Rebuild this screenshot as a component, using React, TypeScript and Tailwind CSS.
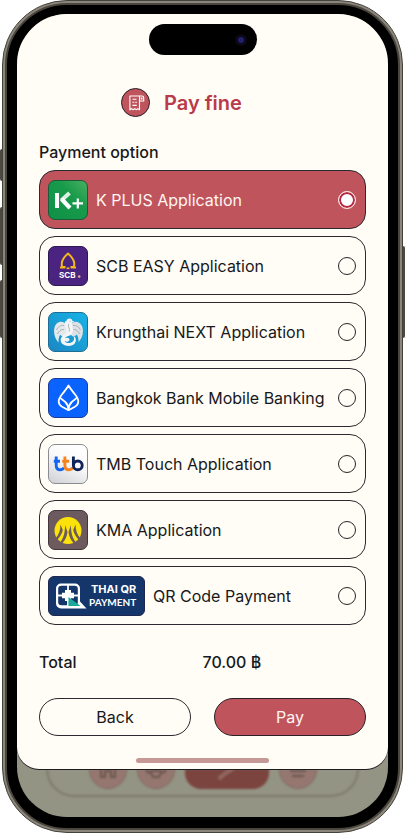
import { useState } from 'react'
import type { ReactNode } from 'react'

const KPlusLogo = () => (
  <svg viewBox="0 0 40 40" className="size-10 shrink-0" aria-hidden="true">
    <defs>
      <linearGradient id="kplus" x1="0" y1="1" x2="1" y2="0">
        <stop offset="0" stopColor="#0e9146" />
        <stop offset="0.6" stopColor="#179a4a" />
        <stop offset="1" stopColor="#4bb062" />
      </linearGradient>
    </defs>
    <rect x="0.5" y="0.5" width="39" height="39" rx="6.5" fill="url(#kplus)" stroke="#1d5a3a" />
    <path d="M9 13v15" stroke="#fff" strokeWidth="4" />
    <path d="M21.5 13 13.2 20.4" stroke="#d9efdf" strokeWidth="4" />
    <path d="m13.6 19 8.4 9" stroke="#fff" strokeWidth="4.2" />
    <path d="M24.5 23.4h10.5M29.8 18.4v10" stroke="#fff" strokeWidth="2.2" />
  </svg>
)

const ScbLogo = () => (
  <svg viewBox="0 0 40 40" className="size-10 shrink-0" aria-hidden="true">
    <rect x="0.5" y="0.5" width="39" height="39" rx="6.5" fill="#4a2480" stroke="#2d1950" />
    <path
      d="M20 7.5c-3 2.6-5.8 6-6.2 9.5-.2 1.6 0 2.8.4 4h11.6c.4-1.2.6-2.4.4-4-.4-3.5-3.2-6.9-6.2-9.5Z"
      fill="none"
      stroke="#f5b81c"
      strokeWidth="2"
      strokeLinejoin="round"
    />
    <path d="M12 21.5h5M23 21.5h5" stroke="#f5b81c" strokeWidth="2" />
    <path d="M17.5 21h5" stroke="#4a2480" strokeWidth="2.4" />
    <path d="M18.5 22.3h3" stroke="#f5b81c" strokeWidth="1.6" />
    <text x="11" y="32" fontSize="8" fontWeight="700" fill="#fff" className="font-['Inter',sans-serif]">
      SCB
    </text>
    <circle cx="31.2" cy="30.5" r="1.3" fill="#e6a9a0" />
  </svg>
)

const KrungthaiLogo = () => (
  <svg viewBox="0 0 40 40" className="size-10 shrink-0" aria-hidden="true">
    <defs>
      <linearGradient id="ktb" x1="0" y1="1" x2="1" y2="0">
        <stop offset="0" stopColor="#1b86c4" />
        <stop offset="1" stopColor="#18b4e6" />
      </linearGradient>
    </defs>
    <rect x="0.5" y="0.5" width="39" height="39" rx="6.5" fill="url(#ktb)" stroke="#1f6c96" />
    {/* wings */}
    <path
      d="M19 12.500C14 7.500 8 9.500 6.500 15.500c-1.300 5.500.5 11 4 15 0-3 .2-5.800 1.700-7.800 1 1.300 2.800 1.800 4.800 1.600 2.500-3 3.500-7.800 2-11.800Z"
      fill="#e6e9eb"
    />
    <path
      d="M22 12.500c4.500-5 11-3 12.500 3 1.300 5.500-.5 11-4 14.500.2-3-.3-5.500-1.800-7.500-1 1.500-2.700 2-4.700 1.500-2.500-2.500-3.500-7.500-2-11.500Z"
      fill="#dde1e4"
    />
    {/* head, body and tail */}
    <path
      d="M17 10.500c-.3-1 .5-1.500 1.300-1 .2-1.800 1.500-3 3.200-3 1.800 0 2.700 1 2.800 2.300l2.200 1-2.500.7c-.5 2 .3 3.500.8 5.500.8 3-.3 6-2.800 7.500-2 1-4.500 1-5 2.800 2.500-1 4.500-.3 4.500 1.500s-2.500 2.500-5 1.200c1.500 2.500 5.500 2.800 8 .8 2-1.600 2-4 .7-6 2.800 1.200 3.500 5 1.700 7.500-2.300 3-8.400 3.500-11.900 1-3-2.200-3-6-.5-8.300 1.600-1.500 3.500-2 4-4 .5-2-.5-4-1-6-.3-1.300-.3-2.500-.5-3.500Z"
      fill="#f4f5f6"
    />
    <g fill="none" stroke="#98a4ac" strokeWidth="0.8">
      <path d="M8.500 18c1.500-3 4-5 7.500-4.500M9.500 22c1.300-3 3.500-4.800 6.500-4.500" />
      <path d="M32.500 18c-1.500-3-4-5-7.500-4.500M31.500 22c-1.300-3-3.500-4.800-6-4.500" />
      <path d="M20.500 12c-.8 2.500 1.500 4.500.8 7.500M21.500 9.300h1" />
    </g>
  </svg>
)

const BangkokBankLogo = () => (
  <svg viewBox="0 0 40 40" className="size-10 shrink-0" aria-hidden="true">
    <rect x="0.5" y="0.5" width="39" height="39" rx="6.5" fill="#0a63ff" stroke="#1b3c9c" />
    <g fill="none" stroke="#fff" strokeWidth="1.8" strokeLinejoin="round">
      <path d="M20.500 7.500c-1.500 3-4 5.400-6 8.200-2 2.700-3.800 5-3.800 7.500 0 2.300 1 4 3 5.300l6.800 3.700 6.800-3.700c2-1.300 3-3 3-5.300 0-2.500-1.800-4.800-3.800-7.500-2-2.800-4.500-5.200-6-8.200Z" />
      <path d="M12 19.500c1.500 1.800 3.500 2.700 5.300 4.500 2.200 2.200 3.200 4.700 3.200 8 0-3.300 1-5.800 3.200-8 1.800-1.800 3.800-2.700 5.300-4.500" />
    </g>
  </svg>
)

const TtbLogo = () => (
  <svg viewBox="0 0 40 40" className="size-10 shrink-0" aria-hidden="true">
    <defs>
      <linearGradient id="ttb" x1="0.2" y1="1" x2="0.7" y2="0">
        <stop offset="0" stopColor="#d3d4d7" />
        <stop offset="0.6" stopColor="#fafafa" />
        <stop offset="1" stopColor="#fff" />
      </linearGradient>
    </defs>
    <rect x="0.5" y="0.5" width="39" height="39" rx="6.5" fill="url(#ttb)" stroke="#8b8c92" />
    <g fill="none" strokeWidth="2.9">
      <path d="M8.200 12.500v8.700c0 3 1.500 4.600 4 4.600 1.700 0 3-.8 3.800-2.200M5.800 17.200h6.200" stroke="#1266f1" />
      <path d="M16.900 12.500v8.700c0 3 1.500 4.600 4 4.600 1.700 0 3-.8 3.800-2.200M14.200 17.200h7" stroke="#f5841f" />
      <path d="M25.400 12.500v9" stroke="#10245a" />
      <circle cx="29.800" cy="21.400" r="4.400" stroke="#10245a" />
    </g>
  </svg>
)

const KmaLogo = () => (
  <svg viewBox="0 0 40 40" className="size-10 shrink-0" aria-hidden="true">
    <rect x="0.5" y="0.5" width="39" height="39" rx="6.5" fill="#6c5a5e" stroke="#40363b" />
    <circle cx="20" cy="20.5" r="13.5" fill="#fbe20a" />
    {/* gaps between the feathers */}
    <g fill="#6c5a5e">
      <path d="M17 15l2.500 7c-.5 4.500-2.300 8.500-5.500 11.500l-2-1c3.500-4.500 5.200-10 5-17.500Z" />
      <path d="M23 15l-2.500 7c.5 4.500 2.300 8.500 5.500 11.500l2-1c-3.500-4.500-5.200-10-5-17.500Z" />
      <path d="M12.500 14.500l2.300 5.500c-1 4-3 7.500-6 10l-1.200-1.800c3.200-3.500 4.900-8 4.900-13.700Z" />
      <path d="M27.500 14.500l-2.300 5.500c1 4 3 7.500 6 10l1.200-1.800c-3.200-3.500-4.900-8-4.900-13.700Z" />
    </g>
  </svg>
)

const ThaiQrLogo = () => (
  <span className="flex h-10 w-[97px] shrink-0 items-center gap-0.5 rounded-md border border-[#1d2850] bg-[#14366a] pl-1.5">
    <svg viewBox="0 0 32 26" className="h-[26px] w-8 shrink-0" aria-hidden="true">
      <path d="M31.500 25.500H6a5 5 0 0 1-5-5V5.500a5 5 0 0 1 5-5h14a5 5 0 0 1 5 5v13Z" fill="#fff" />
      <rect x="3.200" y="2.700" width="19.600" height="19.600" rx="3.200" fill="#14366a" />
      <path d="M13 2v21M2 12.500h22" stroke="#fff" strokeWidth="1.8" />
      <path d="M10 7h6v2.800h3v5.400h-3V18h-6v-2.800H7V9.800h3Z" fill="#fff" />
      <path d="M13.500 23v-9l12 9Z" fill="#1aa89a" />
    </svg>
    <span className="leading-[13px] font-bold text-white">
      <span className="block text-right text-[11px]">THAI QR</span>
      <span className="block text-right font-['Lato',sans-serif] text-[10px]">PAYMENT</span>
    </span>
  </span>
)

type Option = { id: string; label: string; logo: ReactNode }

const OPTIONS: Option[] = [
  { id: 'kplus', label: 'K PLUS Application', logo: <KPlusLogo /> },
  { id: 'scb', label: 'SCB EASY Application', logo: <ScbLogo /> },
  { id: 'ktb', label: 'Krungthai NEXT Application', logo: <KrungthaiLogo /> },
  { id: 'bbl', label: 'Bangkok Bank Mobile Banking', logo: <BangkokBankLogo /> },
  { id: 'ttb', label: 'TMB Touch Application', logo: <TtbLogo /> },
  { id: 'kma', label: 'KMA Application', logo: <KmaLogo /> },
  { id: 'qr', label: 'QR Code Payment', logo: <ThaiQrLogo /> },
]

function PaySheet() {
  const [selected, setSelected] = useState('kplus')

  return (
    <form className="relative z-10 rounded-b-[22px] bg-[#fffdf5] px-[22px] pt-2.5 pb-1.5 shadow-[0_1px_0_#1c1c20]">
      {/* Dynamic island */}
      <div className="mx-auto flex h-[31px] w-[108px] items-center justify-end rounded-full bg-black pr-2.5">
        <span className="flex size-3 items-center justify-center rounded-full bg-[#0c0818]">
          <span className="size-1.5 rounded-full bg-[#20206a]" />
        </span>
      </div>

      <header className="mt-[33px] flex items-center gap-3.5 pl-[82px]">
        <span className="flex size-[29px] items-center justify-center rounded-full border border-[#26202a] bg-[#bf545d]">
          <svg viewBox="0 0 18 18" className="size-[18px]" fill="none" stroke="#fff" strokeWidth="1.1" strokeLinejoin="round" aria-hidden="true">
            <path d="M3.200 2h9.300v13.800l-1.600-1.200-1.600 1.200-1.600-1.200-1.600 1.200-1.600-1.200-1.600 1.200V2Z" />
            <path d="M12.500 2H15c1 0 1.700.8 1.700 1.800V7h-4.200" />
            <path d="M5.500 5.200h4M5.500 8.200h1.800M8.300 8.200h1.600M5.500 11.400h4.200" />
            <path d="M14.600 3.600v2" strokeWidth="1.8" />
          </svg>
        </span>
        <h1 className="text-xl leading-7 font-semibold text-[#b93a4b]">Pay fine</h1>
      </header>

      <fieldset className="mt-[23px]">
        <legend className="text-base leading-6 font-medium">Payment option</legend>
        <div className="mt-1.5 flex flex-col gap-[7px]">
          {OPTIONS.map((o) => (
            <label
              key={o.id}
              htmlFor={o.id}
              className="flex h-[59px] cursor-pointer items-center gap-2 rounded-2xl border border-[#2a2a30] pr-[9px] pl-2 text-base has-checked:bg-[#bf545d] has-checked:text-[#fff6f0]"
            >
              {o.logo}
              <span className="flex-1 whitespace-nowrap">{o.label}</span>
              <input
                id={o.id}
                type="radio"
                name="payment"
                value={o.id}
                checked={selected === o.id}
                onChange={() => setSelected(o.id)}
                className="size-[18px] shrink-0 appearance-none rounded-full border border-[#26262b] checked:border-[#ffe9e6] checked:bg-white checked:shadow-[inset_0_0_0_2px_#b5283d]"
              />
            </label>
          ))}
        </div>
      </fieldset>

      <dl className="mt-[25px] grid grid-cols-2 text-base leading-6 font-medium">
        <dt>Total</dt>
        <dd>70.00 ฿</dd>
      </dl>

      <div className="mt-6 grid grid-cols-2 gap-[23px]">
        <button type="button" className="h-[38px] rounded-full border border-[#2a2a30] text-base">
          Back
        </button>
        <button type="button" className="h-[38px] rounded-full border border-[#2a2028] bg-[#bf545d] text-base text-[#fff6f0]">
          Pay
        </button>
      </div>

      {/* Home indicator */}
      <div className="mx-auto mt-[22px] h-[5px] w-[133px] rounded-full bg-[#c69896]" />
    </form>
  )
}

// Dimmed tab bar, only its lower edge shows below the sheet
function TabBar() {
  return (
    <div className="h-12 px-[29px]" aria-hidden="true">
      <div className="flex h-7 justify-center rounded-b-[28px] border-2 border-t-0 border-[#7c7a6b] blur-[1px]">
        <div className="flex h-5 items-end gap-[10px] overflow-hidden">
          <span className="flex size-[38px] items-end justify-center rounded-full border border-[#7d6a61] bg-[#95776f] pb-2">
            <svg viewBox="0 0 20 20" className="size-5" fill="none" stroke="#6b5650" strokeWidth="2">
              <path d="M3 8v9h4v-6h6v6h4V8" />
            </svg>
          </span>
          <span className="flex size-[38px] items-end justify-center rounded-full border border-[#7d6a61] bg-[#95776f] pb-2">
            <svg viewBox="0 0 20 20" className="size-5" fill="none" stroke="#6b5650" strokeWidth="2">
              <path d="M1 5v7l4 1 2 4h6l2-4 4-1V5M5 13v-2h10v2" />
            </svg>
          </span>
          <span className="flex h-[38px] w-[84px] items-end justify-center rounded-2xl bg-[#7b443f] pb-2">
            <svg viewBox="0 0 24 20" className="h-5 w-6" fill="none" stroke="#926761" strokeWidth="4" strokeLinecap="round">
              <path d="M5 17c3-2 4-5 8-6l7-5" />
            </svg>
          </span>
          <span className="flex size-[38px] items-end justify-center rounded-full border border-[#7d6a61] bg-[#95776f] pb-2">
            <svg viewBox="0 0 20 20" className="size-5" fill="none" stroke="#6b5650" strokeWidth="2">
              <path d="M2 11h16M4 16h12" />
            </svg>
          </span>
        </div>
      </div>
    </div>
  )
}

export default function App() {
  return (
    <main className="relative bg-white px-0.5 font-['Inter','Noto_Sans',sans-serif] text-[#17181c]">
      {/* Side keys */}
      <span className="absolute top-[149px] left-0 h-8 w-1 rounded-l-xs bg-[#4b4840]" />
      <span className="absolute top-[207px] left-0 h-[58px] w-1 rounded-l-xs bg-[#4b4840]" />
      <span className="absolute top-[280px] left-0 h-[58px] w-1 rounded-l-xs bg-[#4b4840]" />
      <span className="absolute top-[246px] right-0 h-[92px] w-1 rounded-r-xs bg-[#4b4840]" />

      {/* Metal rim, then the black bezel */}
      <div className="relative rounded-[65px] border border-[#45423b] bg-[#8b867b] p-0.5">
        <div className="rounded-[62px] border-2 border-[#4a463e] bg-black px-2.5 pt-[9px] pb-[11px]">
          <div className="overflow-hidden rounded-[50px] bg-[#949484]">
            <PaySheet />
            <TabBar />
          </div>
        </div>
      </div>
    </main>
  )
}
